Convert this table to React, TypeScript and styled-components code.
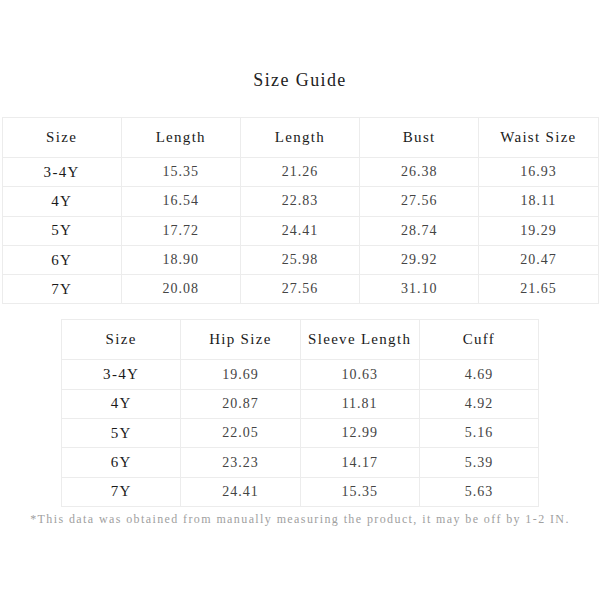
import React from "react";
import styled, { createGlobalStyle } from "styled-components";

const Global = createGlobalStyle`
  html, body { margin: 0; padding: 0; background: #fff; }
  body { font-family: "Liberation Serif", "Noto Sans CJK SC", serif; }
`;

const Page = styled.div`
  width: 600px;
  height: 600px;
  display: flex;
  flex-direction: column;
  align-items: center;
  box-sizing: border-box;
  padding-top: 68px;
`;

const Title = styled.h1`
  margin: 0;
  font-size: 18px;
  line-height: 24px;
  font-weight: normal;
  color: #222;
  letter-spacing: 1.4px;
`;

const Table = styled.table<{ $width: number; $mt: number }>`
  width: ${(p) => p.$width}px;
  margin-top: ${(p) => p.$mt}px;
  border-collapse: collapse;
  table-layout: fixed;
`;

const Th = styled.th`
  height: 39px;
  border: 1px solid #ececec;
  font-size: 15px;
  letter-spacing: 1.3px;
  font-weight: normal;
  color: #1a1a1a;
  text-align: center;
  padding: 0;
`;

const Td = styled.td`
  height: 28.3px;
  border: 1px solid #ececec;
  font-size: 14px;
  letter-spacing: 1px;
  color: #444;
  text-align: center;
  padding: 0;
`;

const SizeTd = styled(Td)`
  font-size: 15px;
  letter-spacing: 1.3px;
  color: #1a1a1a;
`;

const Note = styled.p`
  margin: 5px 0 0;
  font-size: 12px;
  letter-spacing: 1.4px;
  color: #a0a0a0;
  white-space: nowrap;
`;

type Row = [string, ...string[]];

const t1Head = ["Size", "Length", "Length", "Bust", "Waist Size"];
const t1Rows: Row[] = [
  ["3-4Y", "15.35", "21.26", "26.38", "16.93"],
  ["4Y", "16.54", "22.83", "27.56", "18.11"],
  ["5Y", "17.72", "24.41", "28.74", "19.29"],
  ["6Y", "18.90", "25.98", "29.92", "20.47"],
  ["7Y", "20.08", "27.56", "31.10", "21.65"],
];

const t2Head = ["Size", "Hip Size", "Sleeve Length", "Cuff"];
const t2Rows: Row[] = [
  ["3-4Y", "19.69", "10.63", "4.69"],
  ["4Y", "20.87", "11.81", "4.92"],
  ["5Y", "22.05", "12.99", "5.16"],
  ["6Y", "23.23", "14.17", "5.39"],
  ["7Y", "24.41", "15.35", "5.63"],
];

function SizeTable({ head, rows, width, mt }: { head: string[]; rows: Row[]; width: number; mt: number }) {
  return (
    <Table $width={width} $mt={mt}>
      <thead>
        <tr>
          {head.map((h, i) => (
            <Th key={i}>{h}</Th>
          ))}
        </tr>
      </thead>
      <tbody>
        {rows.map((r, i) => (
          <tr key={i}>
            {r.map((c, j) => (j === 0 ? <SizeTd key={j}>{c}</SizeTd> : <Td key={j}>{c}</Td>))}
          </tr>
        ))}
      </tbody>
    </Table>
  );
}

export default function App() {
  return (
    <>
      <Global />
      <Page>
        <Title>Size Guide</Title>
        <SizeTable head={t1Head} rows={t1Rows} width={597} mt={25} />
        <SizeTable head={t2Head} rows={t2Rows} width={478} mt={15} />
        <Note>*This data was obtained from manually measuring the product, it may be off by 1-2 IN.</Note>
      </Page>
    </>
  );
}
